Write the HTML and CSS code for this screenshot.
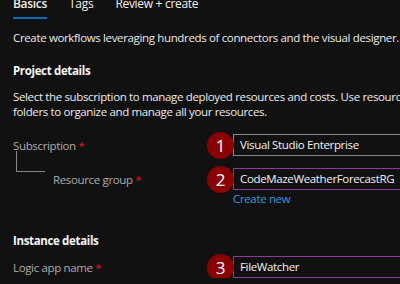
FILE: index.html
```html
<!DOCTYPE html>
<html>
<head>
	<title>Create Logic App</title>
	<link rel="stylesheet" href="styles.css">
</head>
<body>
	<div class="page">
		<div class="tabs">
			<span class="tab active">Basics</span>
			<span class="tab">Tags</span>
			<span class="tab">Review + create</span>
		</div>

		<p class="intro">Create workflows leveraging hundreds of connectors and the visual designer.</p>

		<h3 class="section">Project details</h3>
		<p class="help">Select the subscription to manage deployed resources and costs. Use resource groups like<br>folders to organize and manage all your resources.</p>

		<div class="row row-sub">
			<div class="label">Subscription <span class="req">*</span></div>
			<div class="badge">1</div>
			<div class="field">Visual Studio Enterprise</div>
		</div>

		<div class="row row-rg">
			<div class="label label-child">
				<span class="tree"></span>
				Resource group <span class="req">*</span>
			</div>
			<div class="badge">2</div>
			<div class="field focus">CodeMazeWeatherForecastRG</div>
		</div>
		<div class="create-new">Create new</div>

		<h3 class="section section-inst">Instance details</h3>

		<div class="row row-app">
			<div class="label">Logic app name <span class="req">*</span></div>
			<div class="badge">3</div>
			<div class="field focus">FileWatcher</div>
		</div>
	</div>
</body>
</html>
```
FILE: styles.css
```css
body {
	margin: 0;
	background: #111111;
	color: #ececec;
	font-family: "Open Sans", "Noto Sans", sans-serif;
	font-size: 11.5px;
	letter-spacing: -0.35px;
	overflow: hidden;
}

.page {
	padding-left: 13px;
	width: 600px;
	white-space: nowrap;
}

.tabs {
	display: flex;
	gap: 22px;
	margin-top: -6px;
	height: 25px;
}

.tab {
	font-size: 12px;
	letter-spacing: -0.3px;
	line-height: 20px;
	color: #f0f0f0;
}

.tab.active {
	font-weight: 600;
	border-bottom: 2px solid #0f6cbd;
	height: 23px;
}

.intro {
	margin: 11px 0 0;
	line-height: 16px;
}

.section {
	margin: 17px 0 0;
	font-size: 11.5px;
	font-weight: 700;
	line-height: 16px;
	color: #f5f5f5;
}

.help {
	margin: 10px 0 0;
	line-height: 15px;
}

.row {
	display: flex;
	align-items: center;
	height: 22px;
}

.row-sub {
	margin-top: 15px;
}

.row-rg {
	margin-top: 12px;
}

.label {
	width: 194px;
	color: #aeaba9;
}

.label-child {
	position: relative;
	padding-left: 40px;
	width: 154px;
}

.tree {
	position: absolute;
	left: 3px;
	top: -21px;
	width: 28px;
	height: 20px;
	border-left: 1px solid #8a8886;
	border-bottom: 1px solid #8a8886;
}

.req {
	color: #e81123;
}

.badge {
	width: 27px;
	height: 27px;
	flex: none;
	border-radius: 50%;
	background: #8b0000;
	color: #ffffff;
	font-size: 17px;
	letter-spacing: 0;
	line-height: 27px;
	text-align: center;
	margin-right: -1px;
	position: relative;
	z-index: 1;
}

.field {
	flex: 1;
	height: 20px;
	line-height: 20px;
	border: 1px solid #8a8886;
	padding-left: 6px;
	color: #f3f3f3;
}

.field.focus {
	border-color: #8a3c9c;
}

.create-new {
	margin: 2px 0 0 220px;
	color: #3a96dd;
	line-height: 14px;
}

.section-inst {
	margin-top: 27px;
}

.row-app {
	margin-top: 7px;
}
```
